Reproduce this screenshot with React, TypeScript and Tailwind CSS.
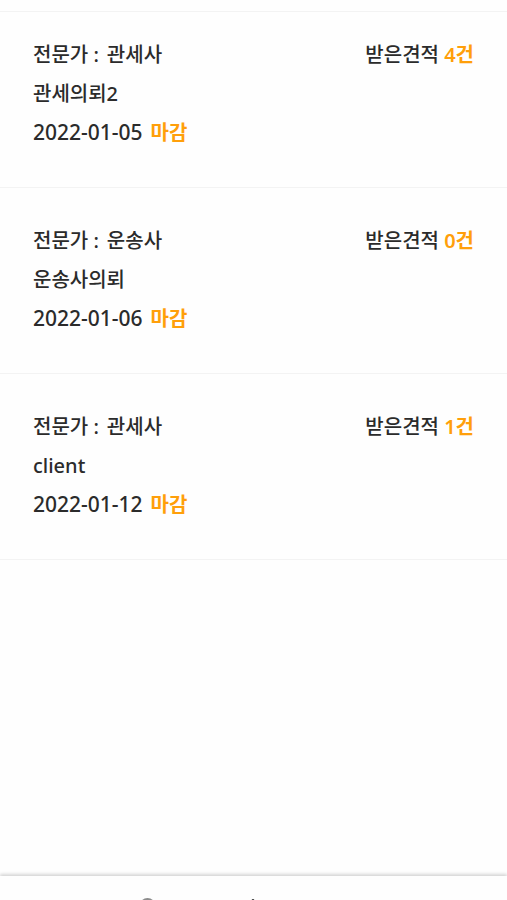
type Quote = {
  id: number;
  expert: string;
  title: string;
  date: string;
  count: number;
};

const quotes: Quote[] = [
  { id: 1, expert: "관세사", title: "관세의뢰2", date: "2022-01-05", count: 4 },
  { id: 2, expert: "운송사", title: "운송사의뢰", date: "2022-01-06", count: 0 },
  { id: 3, expert: "관세사", title: "client", date: "2022-01-12", count: 1 },
];

function QuoteItem({ quote }: { quote: Quote }) {
  return (
    <li className="border-b border-[#f3f3f3] px-[33px] pt-[33px] pb-[35px] text-xl leading-[39px] first:pt-[23px]">
      <div className="flex justify-between">
        <p className="flex gap-2">
          <span>전문가 :</span>
          <span>{quote.expert}</span>
        </p>
        <p>
          받은견적 <span className="font-semibold text-[#ff9f0a]">{quote.count}건</span>
        </p>
      </div>
      <p>{quote.title}</p>
      <p className="flex gap-2">
        <time dateTime={quote.date} className="text-[21px] leading-[39px]">
          {quote.date}
        </time>
        <span className="font-semibold text-[#ff9f0a]">마감</span>
      </p>
    </li>
  );
}

export default function App() {
  return (
    <div className="flex h-screen flex-col overflow-hidden bg-[#fefefe] font-['Noto_Sans','Noto_Sans_CJK_KR',sans-serif] font-medium text-[#2b2b2b]">
      <main className="flex-1 pt-[11px]">
        <ul className="border-t border-[#f3f3f3]">
          {quotes.map((quote) => (
            <QuoteItem key={quote.id} quote={quote} />
          ))}
        </ul>
      </main>
      {/* bottom menu, only its top edge is inside the window */}
      <nav className="grid h-6 shrink-0 grid-cols-5 items-start overflow-hidden bg-[#fefefe] pt-[21px] shadow-[0_-2px_3px_rgba(0,0,0,0.16)]">
        <svg viewBox="0 0 24 24" className="col-start-2 ml-[34px] size-6" aria-hidden="true">
          <circle cx="12.5" cy="9" r="8" fill="#8c8c8c" />
        </svg>
        <svg viewBox="0 0 24 24" className="size-6 justify-self-center" aria-hidden="true">
          <path d="M3 11 12 3l9 8M5 10v12h14V10" fill="none" stroke="#222222" strokeWidth="2" strokeLinejoin="round" />
        </svg>
      </nav>
    </div>
  );
}
